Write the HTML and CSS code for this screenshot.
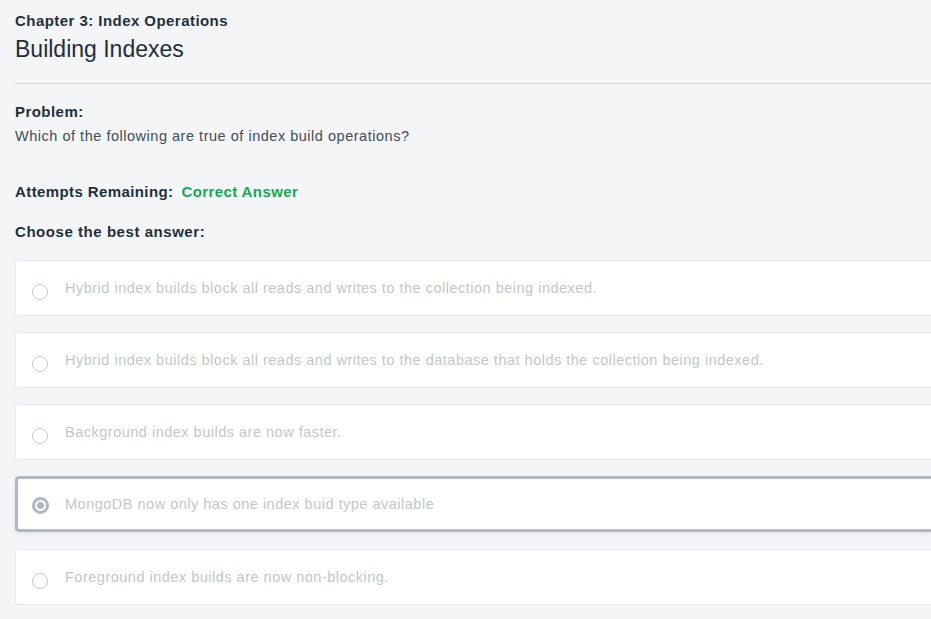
FILE: index.html
```html
<!DOCTYPE html>
<html>
<head>
<meta charset="utf-8">
<link rel="stylesheet" href="styles.css">
</head>
<body>
<div class="page">
  <div class="chapter">Chapter 3: Index Operations</div>
  <h1 class="title">Building Indexes</h1>
  <hr class="divider">
  <div class="label">Problem:</div>
  <div class="question">Which of the following are true of index build operations?</div>
  <div class="attempts"><span class="label-inline">Attempts Remaining:</span><span class="correct">Correct Answer</span></div>
  <div class="choose">Choose the best answer:</div>
  <div class="options">
    <div class="option"><span class="radio"></span><span class="opt-text">Hybrid index builds block all reads and writes to the collection being indexed.</span></div>
    <div class="option"><span class="radio"></span><span class="opt-text">Hybrid index builds block all reads and writes to the database that holds the collection being indexed.</span></div>
    <div class="option"><span class="radio"></span><span class="opt-text">Background index builds are now faster.</span></div>
    <div class="option selected"><span class="radio checked"></span><span class="opt-text">MongoDB now only has one index buid type available</span></div>
    <div class="option"><span class="radio"></span><span class="opt-text">Foreground index builds are now non-blocking.</span></div>
  </div>
</div>
</body>
</html>
```

FILE: styles.css
```css
html, body {
  margin: 0;
  padding: 0;
  background: #f4f5f7;
}
body {
  font-family: "Liberation Sans", Arial, sans-serif;
  color: #21313c;
}
.page {
  padding: 12px 0 0 15px;
}
.chapter {
  font-weight: 700;
  font-size: 15px;
  line-height: 18px;
  letter-spacing: 0.45px;
}
.title {
  margin: 4px 0 0;
  font-weight: 400;
  font-size: 23px;
  line-height: 30px;
  color: #1f2f3a;
}
.divider {
  border: none;
  border-top: 1px solid #d3dadc;
  margin: 19px 0 0;
}
.label {
  margin-top: 19px;
  font-weight: 700;
  font-size: 15px;
  line-height: 18px;
  letter-spacing: 0.45px;
}
.question {
  margin-top: 6px;
  font-size: 14.5px;
  line-height: 18px;
  color: #3d4f58;
  letter-spacing: 0.52px;
}
.attempts {
  margin-top: 38px;
  font-weight: 700;
  font-size: 15px;
  line-height: 18px;
  display: flex;
  gap: 8px;
  letter-spacing: 0.4px;
}
.correct {
  color: #13aa52;
}
.choose {
  margin-top: 22px;
  font-weight: 700;
  font-size: 15px;
  line-height: 18px;
  letter-spacing: 0.55px;
}
.options {
  margin-top: 19px;
  display: flex;
  flex-direction: column;
  gap: 16px;
}
.option {
  background: #fff;
  border: 1px solid #e7eaec;
  border-right: none;
  border-radius: 4px 0 0 4px;
  height: 54px;
  display: flex;
  align-items: center;
  padding-left: 16px;
}
.option.selected {
  border: 3px solid #b0b9bd;
  border-right: none;
  height: 50px;
  padding-left: 14px;
  box-shadow: 0 2px 4px rgba(0,0,0,0.08);
}
.option + .option.selected + .option {
  margin-top: 1px;
}
.radio {
  width: 14px;
  height: 14px;
  border: 1px solid #c3c9cc;
  border-radius: 50%;
  margin-top: 7px;
  flex: none;
}
.radio.checked {
  width: 11px;
  height: 11px;
  border: 3px solid #b0b9bd;
  background: radial-gradient(circle, #b0b9bd 0 3.2px, #fff 3.8px);
  margin-top: 3px;
}
.opt-text {
  margin-left: 17px;
  font-size: 14.5px;
  color: #c1c8cc;
  letter-spacing: 0.5px;
}
.option.selected .opt-text {
  margin-left: 16px;
}
```
